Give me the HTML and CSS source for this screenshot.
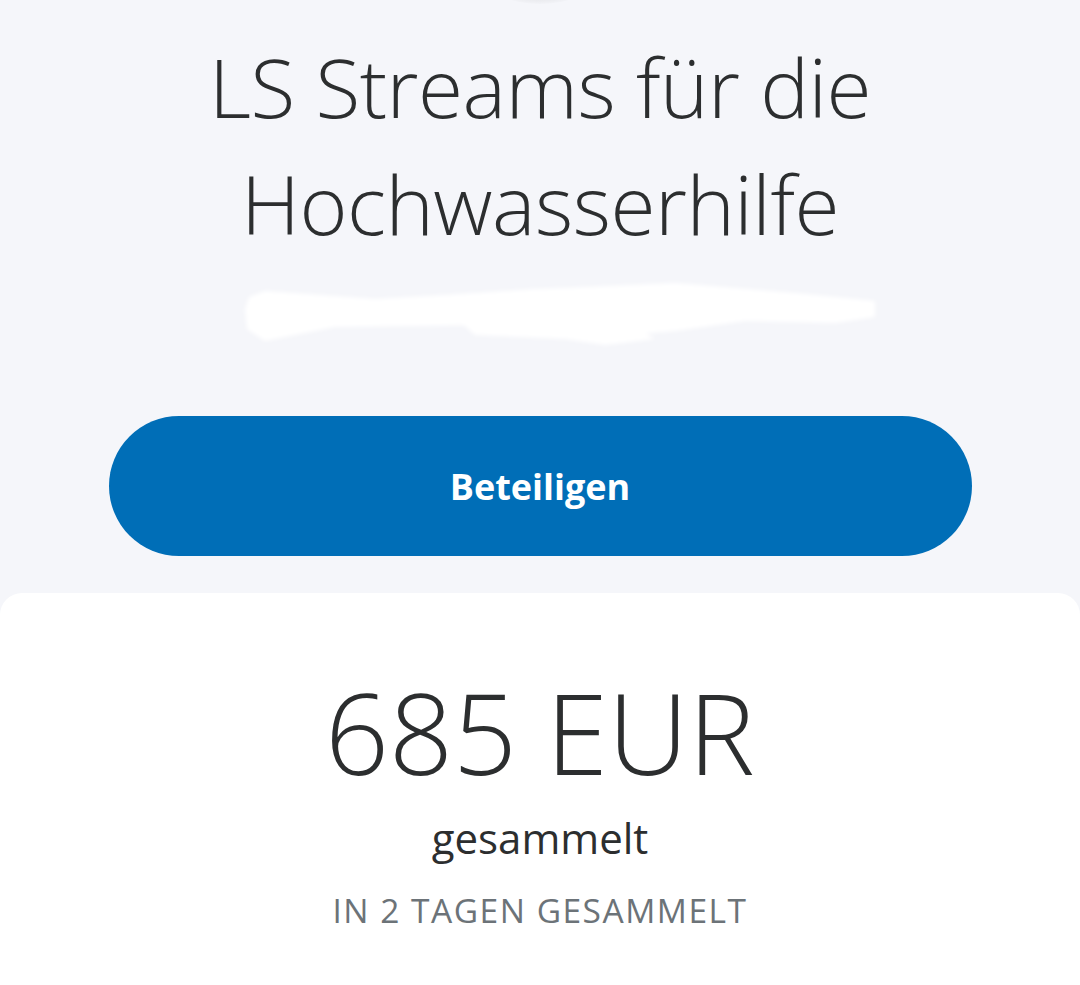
FILE: index.html
```html
<!DOCTYPE html>
<html lang="de">
<head>
    <meta charset="UTF-8">
    <meta name="viewport" content="width=device-width, initial-scale=1.0">
    <title>LS Streams für die Hochwasserhilfe</title>
    <link rel="stylesheet" href="styles.css">
</head>
<body>
    <div class="avatar-shadow"></div>

    <div class="header">
        <h1 class="title">LS Streams für die Hochwasserhilfe</h1>

        <!-- redacted organizer line -->
        <svg class="redacted" width="640" height="72" viewBox="0 0 640 72">
            <path d="M14 18 L30 12 L140 20 L210 16 L300 10 L330 9 L440 4 L560 14 L640 22 L640 38 L600 44 L510 42 L440 52 L360 58 L330 52 L250 46 L100 48 L30 62 L12 50 L10 30 Z" fill="#ffffff"/>
            <path d="M220 38 L380 36 L420 60 L370 66 L330 60 L240 56 Z" fill="#ffffff"/>
        </svg>

        <button class="join-btn">Beteiligen</button>
    </div>

    <div class="card">
        <div class="amount">685 EUR</div>
        <div class="amount-label">gesammelt</div>
        <div class="days">IN 2 TAGEN GESAMMELT</div>
    </div>
</body>
</html>
```

FILE: styles.css
```css
body {
    margin: 0;
    padding: 0;
    background-color: #f5f6fa;
    font-family: "Open Sans", "Noto Sans", sans-serif;
    color: #2c2e2f;
    height: 985px;
    overflow: hidden;
}

.avatar-shadow {
    position: absolute;
    left: 490px;
    top: -40px;
    width: 100px;
    height: 44px;
    border-radius: 50%;
    background: radial-gradient(ellipse at center, rgba(0, 0, 0, 0.18) 0%, rgba(0, 0, 0, 0.05) 55%, rgba(0, 0, 0, 0) 75%);
}

.header {
    display: flex;
    flex-direction: column;
    align-items: center;
    padding-top: 28px;
}

.title {
    margin: 0;
    width: 760px;
    text-align: center;
    font-size: 82px;
    font-weight: 300;
    line-height: 117px;
    letter-spacing: -0.5px;
    color: #2c2e2f;
}

.redacted {
    display: block;
    margin-top: 17px;
    margin-left: 30px;
    filter: blur(2px);
}

.join-btn {
    margin-top: 65px;
    width: 863px;
    height: 140px;
    border: none;
    border-radius: 70px;
    background-color: #006eb7;
    color: #ffffff;
    font-family: "Open Sans", sans-serif;
    font-size: 36px;
    font-weight: 700;
    cursor: pointer;
}

.card {
    margin-top: 37px;
    background-color: #ffffff;
    border-radius: 22px 22px 0 0;
    height: 420px;
    display: flex;
    flex-direction: column;
    align-items: center;
    padding-top: 79px;
    box-sizing: border-box;
}

.amount {
    font-size: 112px;
    font-weight: 300;
    line-height: 120px;
    color: #2c2e2f;
}

.amount-label {
    margin-top: 18px;
    font-size: 42px;
    line-height: 56px;
    color: #2c2e2f;
}

.days {
    margin-top: 19px;
    font-size: 33.5px;
    line-height: 50px;
    letter-spacing: 1.5px;
    color: #6c7378;
}
```
